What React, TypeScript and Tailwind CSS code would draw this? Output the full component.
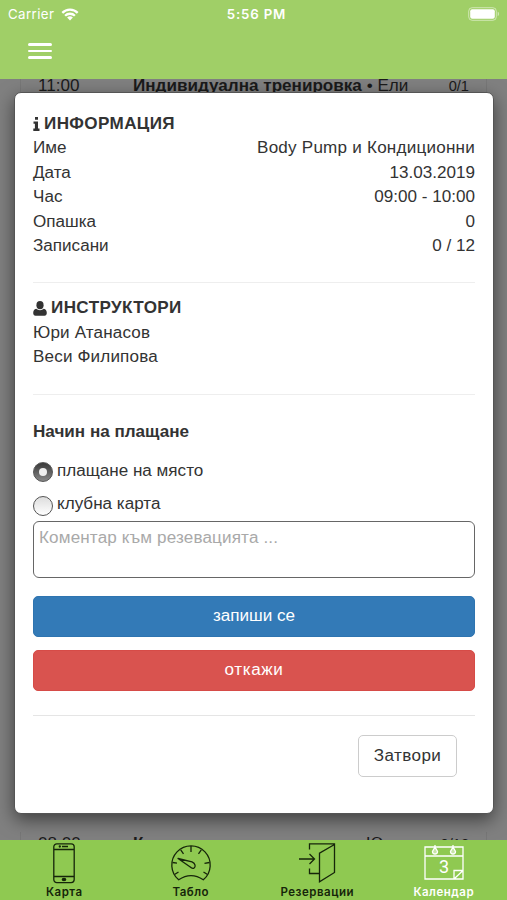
import { useState } from "react";
import type { ReactNode } from "react";

const details = [
  { label: "Име", value: "Body Pump и Кондиционни", spacing: "tracking-[0.22px]" },
  { label: "Дата", value: "13.03.2019" },
  { label: "Час", value: "09:00 - 10:00" },
  { label: "Опашка", value: "0" },
  { label: "Записани", value: "0 / 12" },
];

const instructors = ["Юри Атанасов", "Веси Филипова"];

const payments = [
  { id: "place", label: "плащане на място" },
  { id: "card", label: "клубна карта" },
];

const StatusBar = () => (
  <div className="grid h-7 grid-cols-3 items-center pl-2 pr-[7px] font-['Inter',sans-serif] text-[13.3px] text-white">
    <div className="flex items-center gap-[7px]">
      <span className="tracking-[0.4px]">Carrier</span>
      <svg width="18" height="13" viewBox="0 0 18 13" fill="none" stroke="white" strokeWidth="2.3">
        <path d="M1.3 4.9a10.9 10.9 0 0 1 15.4 0" />
        <path d="M4.1 7.8a6.9 6.9 0 0 1 9.8 0" />
        <path d="M9 12.5 6.1 9.6a4.1 4.1 0 0 1 5.8 0z" fill="white" stroke="none" />
      </svg>
    </div>
    <span className="whitespace-nowrap pl-[5px] text-center font-semibold tracking-[0.8px]">5:56 PM</span>
    <svg className="justify-self-end" width="32" height="14" viewBox="0 0 32 14">
      <rect x="0.7" y="0.7" width="27.6" height="12.6" rx="3.5" fill="none" stroke="white" strokeOpacity="0.5" />
      <rect x="2.2" y="2.2" width="24.6" height="9.6" rx="2" fill="white" />
      <path d="M29.7 4.8c1.8.5 1.8 3.9 0 4.4z" fill="white" fillOpacity="0.5" />
    </svg>
  </div>
);

const Header = () => (
  <header className="h-[79px] shrink-0 bg-[#a0cf67]">
    <StatusBar />
    <button aria-label="Меню" className="ml-7 mt-[15px] flex w-6 flex-col gap-[4px]">
      <span className="h-[2.7px] w-full rounded-full bg-white" />
      <span className="h-[2.7px] w-full rounded-full bg-white" />
      <span className="h-[2.7px] w-full rounded-full bg-white" />
    </button>
  </header>
);

const ScheduleRow = ({ time, title, coach, count }: { time: string; title: string; coach: string; count: string }) => (
  <div className="mx-5 flex h-6 items-center border-x border-[#777] pl-[17px] pr-[17px] text-[17.1px] text-[#1a1a1a]">
    <span className="w-[95px]">{time}</span>
    <span className="flex-1 whitespace-nowrap">
      <b>{title}</b> • {coach}
    </span>
    <span className="text-[14.6px]">{count}</span>
  </div>
);

const Heading = ({ icon, children }: { icon: ReactNode; children: ReactNode }) => (
  <h2 className="flex items-center gap-[4px] font-bold tracking-[0.38px]">
    {icon}
    {children}
  </h2>
);

const BookingModal = () => {
  const [payment, setPayment] = useState("place");

  return (
    <div className="absolute left-[14px] right-[13px] top-[13px] h-[722px] rounded-[7px] border border-[#555] bg-white px-[18px] pt-[19px] shadow-[0_6px_18px_rgba(0,0,0,0.5)]">
      <Heading
        icon={
          <svg className="-mt-px" width="7" height="14" viewBox="0 0 7 14" fill="#333">
            <path d="M2 0h3v2.7H2zM.5 4.4H5v7.2h1.5V14H.3v-2.4h1.6V6.8H.5z" />
          </svg>
        }
      >
        ИНФОРМАЦИЯ
      </Heading>
      {details.map(({ label, value, spacing }) => (
        <div key={label} className="flex justify-between">
          <span>{label}</span>
          <span className={spacing}>{value}</span>
        </div>
      ))}

      <hr className="mb-[13px] mt-6 border-[#eee]" />

      <Heading
        icon={
          <svg className="-mt-px" width="14" height="15" viewBox="0 0 14 15" fill="#333">
            <ellipse cx="7" cy="4.2" rx="3.6" ry="4.1" />
            <path d="M3.2 7.8C1.1 8.2.2 9.8.2 12.1c0 1.6.9 2.7 2.3 2.7h9c1.4 0 2.3-1.1 2.3-2.7 0-2.300-.9-3.900-3-4.300C8.700 9.700 5.300 9.700 3.200 7.800z" />
          </svg>
        }
      >
        ИНСТРУКТОРИ
      </Heading>
      {instructors.map((name) => (
        <p key={name} className="tracking-[0.15px]">
          {name}
        </p>
      ))}

      <hr className="mb-[25px] mt-6 border-[#eee]" />

      <h3 className="font-bold">Начин на плащане</h3>

      <div className="mt-[15px] flex flex-col gap-[9px]">
        {payments.map(({ id, label }) => (
          <label key={id} className="flex items-center gap-[4px]">
            <input
              type="radio"
              name="payment"
              checked={payment === id}
              onChange={() => setPayment(id)}
              className="peer sr-only"
            />
            <span className="mt-[2px] flex size-5 items-center justify-center rounded-full border border-[#555] bg-linear-to-b from-[#ddd] to-white peer-checked:from-[#3a3a3a] peer-checked:to-[#888]">
              {payment === id && <span className="size-2 rounded-full bg-[#eee]" />}
            </span>
            {label}
          </label>
        ))}
      </div>

      <textarea
        placeholder="Коментар към резевацията ..."
        className="mt-[4px] block h-[57px] w-full resize-none rounded-[6px] border-[1.5px] border-[#666] px-[5px] pt-[4px] tracking-[0.15px] placeholder:text-[#a9a9a9]"
      />

      <button className="mt-[18px] block h-[41px] w-full rounded-[5px] border border-[#2e74b0] bg-[#337ab7] text-white">
        запиши се
      </button>
      <button className="mt-[13px] block h-[41px] w-full rounded-[5px] border border-[#d64b47] bg-[#d9534f] tracking-[0.6px] text-white">
        откажи
      </button>

      <div className="mt-6 flex justify-end border-t border-[#e5e5e5] pr-[18px] pt-[19px]">
        <button className="h-[42px] w-[99px] rounded-[5px] border border-[#ccc] tracking-[0.4px]">Затвори</button>
      </div>
    </div>
  );
};

const PhoneIcon = () => (
  <svg width="22" height="41" viewBox="0 0 22 41" fill="none" stroke="currentColor" strokeWidth="1.3">
    <rect x="0.8" y="0.8" width="20.4" height="38.8" rx="3" />
    <path d="M1 6.500h20M1 33.500h20M9 3.500h6" />
    <circle cx="6.800" cy="3.500" r="0.500" fill="currentColor" />
    <ellipse cx="11" cy="36.500" rx="1.700" ry="1" fill="currentColor" />
  </svg>
);

const GaugeIcon = () => (
  <svg width="42" height="41" viewBox="0 0 42 41" fill="none" stroke="currentColor" strokeWidth="1.3" strokeLinejoin="round">
    <path d="M8.700 36.800A19.200 19.200 0 1 1 33.300 36.800Q21 28.500 8.700 36.800z" />
    <path d="M21 3v6M10.700 6.800l2.800 4M31.300 6.800l-2.800 4M2.500 19.500l4.500.7M39.500 19.500l-5 .8M4.500 31.500l4-2.500M37.500 31.500l-4-2.500" />
    <path d="M8 15.500 22 18.800c3.600 1.500 3.900 5 1.900 6.300-1.200.6-2.600 0-4-1.300z" />
  </svg>
);

const DoorIcon = () => (
  <svg width="37" height="41" viewBox="0 0 37 41" fill="none" stroke="currentColor" strokeWidth="1.3">
    <path d="M10.500 6.500V.8h25v28.700L20.500 38.800V10.200L35.500 1.500" />
    <path d="M10.500 25.500v5h10M0 16h15M10.500 11l5 5-5 5" />
  </svg>
);

const CalendarIcon = () => (
  <svg width="40" height="41" viewBox="0 0 40 41" fill="none" stroke="currentColor" strokeWidth="1.3">
    <path d="M1 4h38v32H1zM1 13h38M30 36V27.500h9M30 36l9-8.500" />
    <path d="M11 2v3M29 2v3M8.500 8.500a2.500 2.500 0 1 0 5 0L11 4zM26.500 8.500a2.500 2.500 0 1 0 5 0L29 4z" fill="currentColor" fillOpacity="0.500" />
    <text x="15" y="30" fill="currentColor" stroke="none" fontFamily="Roboto, sans-serif" fontSize="18" fontWeight="400" letterSpacing="0">
      3
    </text>
  </svg>
);

const tabs = [
  { label: "Карта", icon: <PhoneIcon /> },
  { label: "Табло", icon: <GaugeIcon /> },
  { label: "Резервации", icon: <DoorIcon /> },
  { label: "Календар", icon: <CalendarIcon />, active: true },
];

const TabBar = () => (
  <nav className="grid h-[60px] shrink-0 grid-cols-4 bg-[#8fc951] pl-px font-['Inter',sans-serif] text-[11.5px] font-semibold tracking-[0.5px]">
    {tabs.map(({ label, icon, active }) => (
      <a key={label} href="#" className={`flex flex-col items-center pt-[3px] leading-4 ${active ? "text-white" : "text-[#16250a]"}`}>
        {icon}
        {label}
      </a>
    ))}
  </nav>
);

export default function App() {
  return (
    <div className="flex h-[900px] w-[507px] flex-col overflow-hidden font-['Liberation_Sans',sans-serif] text-[17.09px] leading-[24.41px] text-[#333]">
      <Header />
      <main className="relative flex flex-1 flex-col justify-between overflow-hidden bg-[#808080]">
        <div className="-mt-[5px]">
          <ScheduleRow time="11:00" title="Индивидуална тренировка" coach="Ели" count="0/1" />
        </div>
        <div className="-mb-[16px]">
          <ScheduleRow time="08:00" title="Кондиционна тренировка" coach="Юри" count="0/12" />
        </div>
        <BookingModal />
      </main>
      <TabBar />
    </div>
  );
}
